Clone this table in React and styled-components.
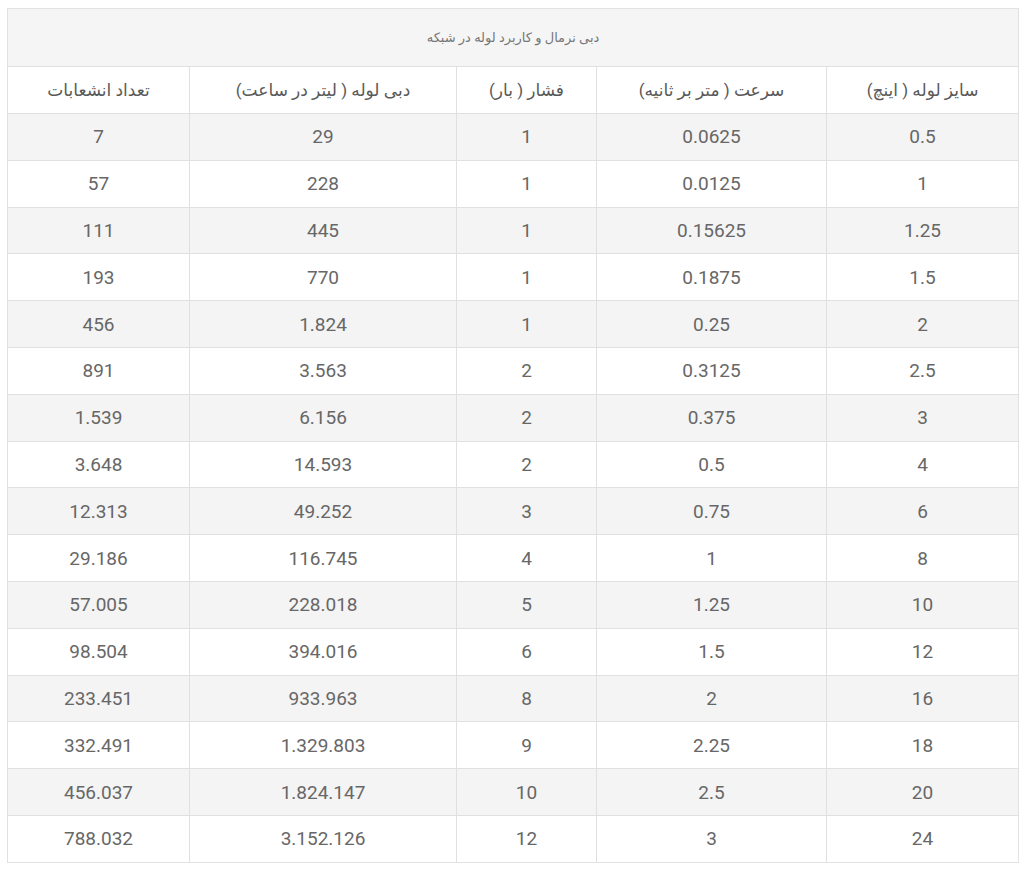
import React from 'react';
import styled, { createGlobalStyle } from 'styled-components';

const GlobalStyle = createGlobalStyle`
    body {
        margin: 0;
        background: #ffffff;
        font-family: Roboto, "DejaVu Sans", sans-serif;
    }
`;

const Page = styled.div`
    padding: 8px 6px 0 7px;
`;

const Table = styled.table`
    direction: rtl;
    width: 1011px;
    border-collapse: collapse;
    table-layout: fixed;
    border: 1px solid #e2e2e2;
    color: #666666;
`;

const Col = styled.col`
    width: ${props => props.w}px;
`;

const Caption = styled.th`
    height: 57px;
    background: #f5f5f5;
    border-bottom: 1px solid #e0e0e0;
    font-weight: 400;
    font-size: 13px;
    color: #777777;
    text-align: center;
    padding: 0;
`;

const HeadCell = styled.th`
    height: 46px;
    font-weight: 400;
    font-size: 17px;
    color: #595959;
    border-left: 1px solid #e0e0e0;
    text-align: center;
    padding: 0;
`;

const Row = styled.tr`
    height: 46.8px;
    background: ${props => props.striped ? '#f4f4f4' : '#ffffff'};
    border-top: 1px solid #e0e0e0;
`;

const Cell = styled.td`
    font-size: 19px;
    color: #676767;
    text-align: center;
    border-left: 1px solid #e0e0e0;
    padding: 0;
`;

const columns = [
    { title: 'سایز لوله ( اینچ)', w: 192 },
    { title: 'سرعت ( متر بر ثانیه)', w: 230 },
    { title: 'فشار ( بار)', w: 140 },
    { title: 'دبی لوله ( لیتر در ساعت)', w: 267 },
    { title: 'تعداد انشعابات', w: 182 }
];

const rows = [
    ['0.5', '0.0625', '1', '29', '7'],
    ['1', '0.0125', '1', '228', '57'],
    ['1.25', '0.15625', '1', '445', '111'],
    ['1.5', '0.1875', '1', '770', '193'],
    ['2', '0.25', '1', '1.824', '456'],
    ['2.5', '0.3125', '2', '3.563', '891'],
    ['3', '0.375', '2', '6.156', '1.539'],
    ['4', '0.5', '2', '14.593', '3.648'],
    ['6', '0.75', '3', '49.252', '12.313'],
    ['8', '1', '4', '116.745', '29.186'],
    ['10', '1.25', '5', '228.018', '57.005'],
    ['12', '1.5', '6', '394.016', '98.504'],
    ['16', '2', '8', '933.963', '233.451'],
    ['18', '2.25', '9', '1.329.803', '332.491'],
    ['20', '2.5', '10', '1.824.147', '456.037'],
    ['24', '3', '12', '3.152.126', '788.032']
];

function App() {
    return (
        <Page>
            <GlobalStyle />
            <Table>
                <colgroup>
                    {columns.map(col => <Col key={col.title} w={col.w} />)}
                </colgroup>
                <thead>
                    <tr>
                        <Caption colSpan={5}>دبی نرمال و کاربرد لوله در شبکه</Caption>
                    </tr>
                    <tr>
                        {columns.map(col => (
                            <HeadCell key={col.title}>{col.title}</HeadCell>
                        ))}
                    </tr>
                </thead>
                <tbody>
                    {rows.map((row, index) => (
                        <Row key={index} striped={index % 2 === 0}>
                            {row.map((value, i) => (
                                <Cell key={i}>{value}</Cell>
                            ))}
                        </Row>
                    ))}
                </tbody>
            </Table>
        </Page>
    );
}

export default App;
